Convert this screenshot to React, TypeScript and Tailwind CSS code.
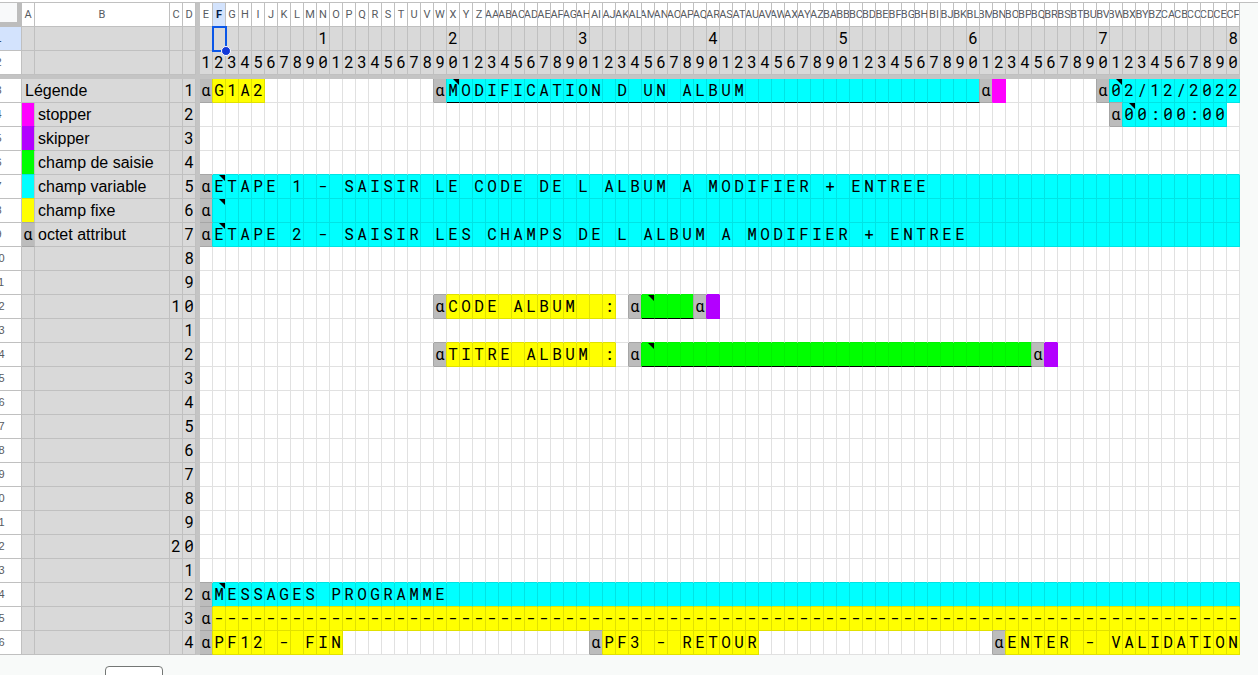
import React from "react";

type Fill = "none" | "frozen" | "attr" | "cyan" | "yellow" | "green" | "magenta" | "purple";

interface CellData {
  char: string;
  fill: Fill;
  note?: boolean;
  underline?: boolean;
}

const COLUMN_COUNT = 80;
const ROW_COUNT = 24;

const background: Record<Fill, string> = {
  none: "bg-white",
  frozen: "bg-[#d9d9d9]",
  attr: "bg-[#bcbcbc]",
  cyan: "bg-[#00ffff]",
  yellow: "bg-[#ffff00]",
  green: "bg-[#00ff00]",
  magenta: "bg-[#ff00ff]",
  purple: "bg-[#b300ff]",
};

const rightLine: Record<Fill, string> = {
  none: "border-r-[#e1e1e1]",
  frozen: "border-r-[#c0c0c0]",
  attr: "border-r-[#a6a6a6]",
  cyan: "border-r-[#00e4e4]",
  yellow: "border-r-[#e1e100]",
  green: "border-r-[#00f200]",
  magenta: "border-r-[#ff00ff]",
  purple: "border-r-[#b300ff]",
};

const bottomLine: Record<Fill, string> = {
  none: "border-b-[#e1e1e1]",
  frozen: "border-b-[#c0c0c0]",
  attr: "border-b-[#a6a6a6]",
  cyan: "border-b-[#00e4e4]",
  yellow: "border-b-[#e1e100]",
  green: "border-b-[#00f200]",
  magenta: "border-b-[#ff00ff]",
  purple: "border-b-[#b300ff]",
};

const sheet: CellData[][] = Array.from({ length: ROW_COUNT }, () =>
  Array.from({ length: COLUMN_COUNT }, () => ({ char: "", fill: "none" as Fill })),
);

// Rows and columns are numbered from 1, as on the terminal screen.
function field(
  row: number,
  column: number,
  text: string,
  fill: Fill,
  length = text.length,
  options: { note?: boolean; underline?: boolean } = {},
) {
  sheet[row - 1][column - 1] = { char: "α", fill: "attr" };
  for (let i = 0; i < length; i++) {
    sheet[row - 1][column + i] = {
      char: (text[i] ?? "").trim(),
      fill,
      note: options.note && i === 0,
      underline: options.underline,
    };
  }
}

field(1, 1, "G1A2", "yellow");
field(1, 19, "MODIFICATION D UN ALBUM", "cyan", 41, { note: true, underline: true });
field(1, 61, "", "magenta", 1);
field(1, 70, "02/12/2022", "cyan", 10, { note: true });
field(2, 71, "00:00:00", "cyan", 8, { note: true });
field(5, 1, "ETAPE 1 - SAISIR LE CODE DE L ALBUM A MODIFIER + ENTREE", "cyan", 79, { note: true });
field(6, 1, "", "cyan", 79, { note: true });
field(7, 1, "ETAPE 2 - SAISIR LES CHAMPS DE L ALBUM A MODIFIER + ENTREE", "cyan", 79, { note: true });
field(10, 19, "CODE ALBUM  :", "yellow");
field(10, 34, "", "green", 4, { note: true, underline: true });
field(10, 39, "", "purple", 1);
field(12, 19, "TITRE ALBUM :", "yellow");
field(12, 34, "", "green", 30, { note: true, underline: true });
field(12, 65, "", "purple", 1);
field(22, 1, "MESSAGES PROGRAMME", "cyan", 79, { note: true });
field(23, 1, "-".repeat(79), "yellow");
field(24, 1, "PF12 - FIN", "yellow");
field(24, 31, "PF3 - RETOUR", "yellow");
field(24, 62, "ENTER - VALIDATION", "yellow");

const legend: { label: string; fill: Fill; char?: string }[] = [
  { label: "stopper", fill: "magenta" },
  { label: "skipper", fill: "purple" },
  { label: "champ de saisie", fill: "green" },
  { label: "champ variable", fill: "cyan" },
  { label: "champ fixe", fill: "yellow" },
  { label: "octet attribut", fill: "attr", char: "α" },
];

function columnName(index: number): string {
  const last = String.fromCharCode(65 + (index % 26));
  return index < 26 ? last : String.fromCharCode(64 + Math.floor(index / 26)) + last;
}

const frozenCell = "border-r border-b border-[#c0c0c0] bg-[#d9d9d9] p-0";
const columns = Array.from({ length: COLUMN_COUNT }, (_, i) => i);

function Glyph({ char }: { char: string }) {
  return (
    <div className="flex h-[23px] justify-center font-['Roboto_Mono','DejaVu_Sans_Mono',monospace] text-[16px] leading-[21px] text-black">
      {char}
    </div>
  );
}

function ColumnHeader({ name, selected }: { name: string; selected?: boolean }) {
  return (
    <th
      scope="col"
      className={`border-r border-b border-[#c0c0c0] p-0 ${
        selected ? "bg-[#d3e3fd] font-bold text-[#041e49]" : "bg-white font-normal text-[#575b5f]"
      }`}
    >
      <div className="flex h-[23px] justify-center overflow-hidden text-[11px] leading-[23px]">{name}</div>
    </th>
  );
}

function RowHeader({ row, selected }: { row: number; selected?: boolean }) {
  return (
    <th
      scope="row"
      className={`border-r border-b border-[#c0c0c0] p-0 text-[11px] font-normal ${
        selected ? "bg-[#d3e3fd] text-[#041e49]" : "bg-white text-[#575b5f]"
      }`}
    >
      <div className="h-[23px] overflow-hidden">
        <div className="-ml-6 text-center leading-[23px]">{row}</div>
      </div>
    </th>
  );
}

function FreezeColumn() {
  return <td className="bg-[#c4c4c4] p-0" />;
}

function SheetCell({ row, column }: { row: number; column: number }) {
  const cell = sheet[row][column];
  const right = sheet[row][column + 1]?.fill ?? "none";
  const below = sheet[row + 1]?.[column].fill ?? "none";
  const rightFill = right !== "none" ? right : cell.fill;
  const belowFill = below !== "none" ? below : cell.fill;
  return (
    <td
      className={`relative border-r border-b p-0 ${background[cell.fill]} ${rightLine[rightFill]} ${
        cell.underline ? "border-b-black" : bottomLine[belowFill]
      }`}
    >
      <Glyph char={cell.char} />
      {cell.note && (
        <svg className="absolute top-0 right-0 h-[6px] w-[6px]" viewBox="0 0 6 6" aria-hidden="true">
          <path d="M0 0H6V6Z" fill="#000" />
        </svg>
      )}
    </td>
  );
}

function LegendCells({ row }: { row: number }) {
  if (row === 0) {
    return (
      <td colSpan={2} className={frozenCell}>
        <div className="pl-[3px] leading-[23px]">Légende</div>
      </td>
    );
  }
  const item = legend[row - 1];
  if (!item) {
    return (
      <>
        <td className={frozenCell} />
        <td className={frozenCell} />
      </>
    );
  }
  const next = legend[row]?.fill ?? item.fill;
  return (
    <>
      <td className={`border-r border-b border-r-[#c0c0c0] p-0 ${background[item.fill]} ${bottomLine[next]}`}>
        <Glyph char={item.char ?? ""} />
      </td>
      <td className={frozenCell}>
        <div className="pl-[3px] leading-[23px]">{item.label}</div>
      </td>
    </>
  );
}

export default function App() {
  return (
    <div className="h-screen overflow-hidden bg-[#f8faf9] font-['Liberation_Sans',Arial,sans-serif] text-[16px] text-black">
      <div className="h-[3px] border-b border-[#c0c0c0] bg-white" />
      <table className="w-[1240px] table-fixed border-separate border-spacing-0">
        <colgroup>
          <col className="w-[22px]" />
          <col className="w-[13px]" />
          <col className="w-[135px]" />
          <col className="w-[13px]" />
          <col className="w-[13px]" />
          <col className="w-[4px]" />
          {columns.map((c) => (
            <col key={c} className="w-[13px]" />
          ))}
        </colgroup>
        <thead className="font-['Roboto',sans-serif]">
          <tr className="h-6">
            <td className="border-r-[5px] border-b-[5px] border-[#bdbdbd] bg-[#f8f9fa] p-0" />
            {["A", "B", "C", "D"].map((name) => (
              <ColumnHeader key={name} name={name} />
            ))}
            <FreezeColumn />
            {columns.map((c) => (
              <ColumnHeader key={c} name={columnName(c + 4)} selected={c === 1} />
            ))}
          </tr>
        </thead>
        <tbody>
          {[1, 2].map((row) => (
            <tr key={row} className="h-6">
              <RowHeader row={row} selected={row === 1} />
              <td className={frozenCell} />
              <td className={frozenCell} />
              <td className={frozenCell} />
              <td className={frozenCell} />
              <FreezeColumn />
              {columns.map((c) => {
                const n = c + 1;
                const tens = n % 10 === 0 ? String(n / 10) : "";
                return (
                  <td key={c} className={`relative ${frozenCell}`}>
                    <Glyph char={row === 1 ? tens : String(n % 10)} />
                    {row === 1 && c === 1 && (
                      <div className="absolute -inset-px z-10 -mr-px -mb-px border-2 border-[#0b57e8]">
                        <span className="absolute -right-[6px] -bottom-[6px] h-[10px] w-[10px] rounded-full border border-white bg-[#1238d8]" />
                      </div>
                    )}
                  </td>
                );
              })}
            </tr>
          ))}
          <tr className="h-1">
            <td colSpan={6 + COLUMN_COUNT} className="bg-[#c4c4c4] p-0" />
          </tr>
          {sheet.map((cells, row) => {
            const n = row + 1;
            return (
              <tr key={row} className="h-6">
                <RowHeader row={row + 3} />
                <LegendCells row={row} />
                <td className={frozenCell}>
                  <Glyph char={n % 10 === 0 ? String(n / 10) : ""} />
                </td>
                <td className={frozenCell}>
                  <Glyph char={String(n % 10)} />
                </td>
                <FreezeColumn />
                {cells.map((_, c) => (
                  <SheetCell key={c} row={row} column={c} />
                ))}
              </tr>
            );
          })}
        </tbody>
      </table>
      <div className="pt-[11px] pl-[105px]">
        <button
          type="button"
          aria-label="Ajouter des lignes"
          className="block h-8 w-[58px] rounded border border-[#747775] bg-white"
        />
      </div>
    </div>
  );
}
